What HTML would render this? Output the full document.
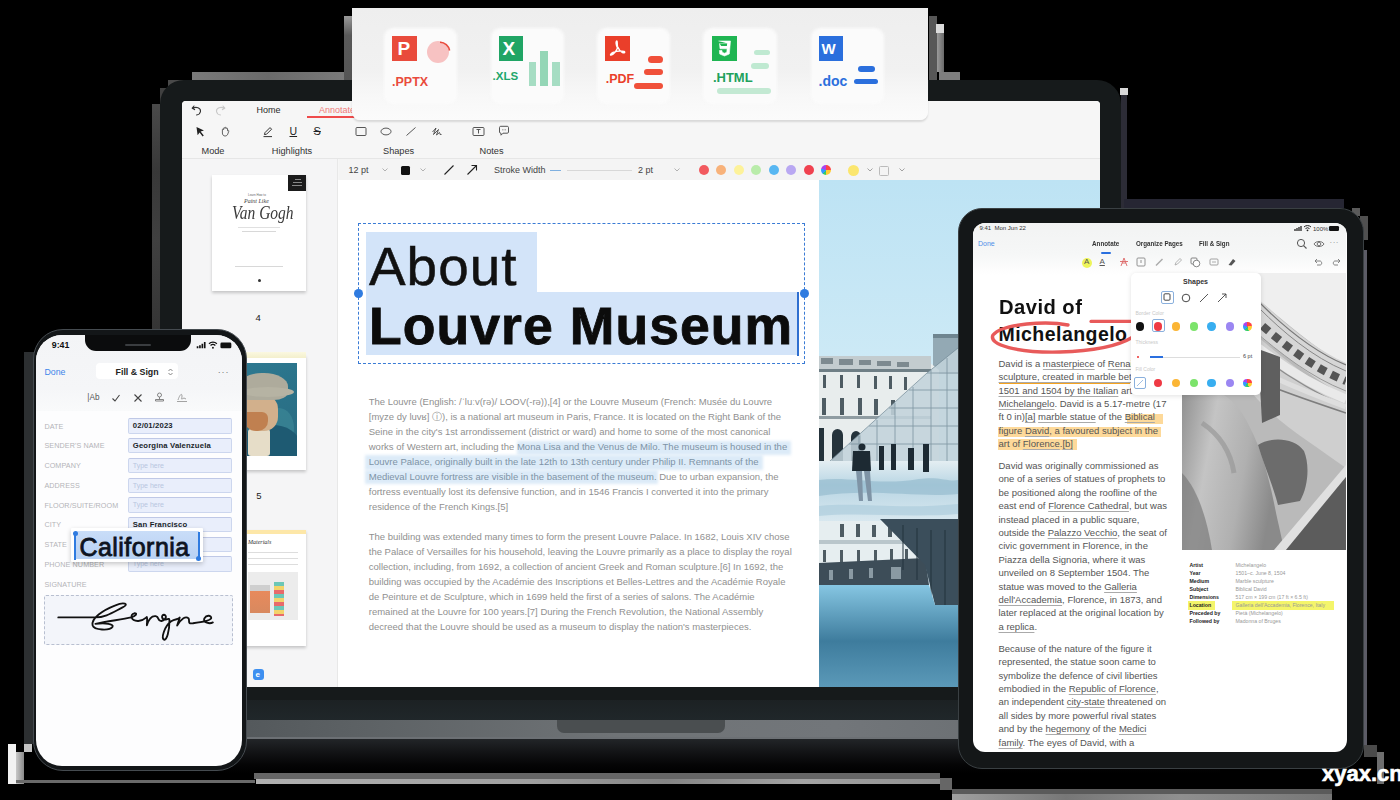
<!DOCTYPE html>
<html><head><meta charset="utf-8">
<style>
*{margin:0;padding:0;box-sizing:border-box}
html,body{width:1400px;height:800px;overflow:hidden;background:#000}
body{position:relative;font-family:"Liberation Sans",sans-serif;color:#222}
.a{position:absolute}
.t{position:absolute;white-space:pre;line-height:1}
</style></head><body>


<!-- artifacts -->
<div class="a" style="left:8px;top:744px;width:8px;height:40px;background:#f2f2f2"></div>
<div class="a" style="left:16px;top:752px;width:8px;height:32px;background:linear-gradient(90deg,#c8c8c8,#8a8a8a)"></div>
<div class="a" style="left:24px;top:744px;width:8px;height:8px;background:#c4c4c4"></div>
<div class="a" style="left:16px;top:780px;width:239px;height:3px;background:#6a6a6a"></div>
<div class="a" style="left:254px;top:772.5px;width:686px;height:6px;background:#666"></div>
<div class="a" style="left:255.5px;top:778.5px;width:684.5px;height:5.5px;background:linear-gradient(90deg,#b0b0b0,#a0a0a0 40%,#858585 60%,#a4a4a4 80%,#909090)"></div>
<div class="a" style="left:940px;top:778px;width:12px;height:12px;background:#666"></div>
<div class="a" style="left:952px;top:789px;width:380px;height:5px;background:#5a5a5a"></div>
<div class="a" style="left:952px;top:794px;width:380px;height:6px;background:linear-gradient(90deg,#a0a0a0,#777 30%,#8f8f8f 60%,#767676)"></div>

<div class="a" style="left:192px;top:72px;width:153px;height:8.5px;background:linear-gradient(90deg,#7a7a7a,#6a6a6a 50%,#7a7a7a)"></div>
<div class="a" style="left:168px;top:80px;width:30px;height:20px;background:#4a4a4a"></div>
<div class="a" style="left:160px;top:88px;width:10px;height:20px;background:#404040"></div>
<div class="a" style="left:152px;top:104px;width:9px;height:226px;background:linear-gradient(#4a4a4a,#383838 30%,#404040 60%,#353535)"></div>

<div class="a" style="left:1120px;top:88px;width:7.5px;height:7px;background:#d8d8d8"></div>
<div class="a" style="left:1121px;top:95px;width:6px;height:113px;background:#2c2c36"></div>
<div class="a" style="left:1124px;top:199px;width:220px;height:9px;background:#262633"></div>
<div class="a" style="left:1352px;top:208px;width:8px;height:8px;background:#5a5a5a"></div>
<div class="a" style="left:1360px;top:216px;width:8px;height:24px;background:#505050"></div>

<div class="a" style="left:344.4px;top:16px;width:8px;height:64px;background:linear-gradient(#9a9a9a,#5a5a5a 30%,#555)"></div>
<div class="a" style="left:929px;top:16px;width:8px;height:64px;background:#575757"></div>
<div class="a" style="left:936px;top:24px;width:8px;height:9px;background:#dcdcdc"></div>
<div class="a" style="left:937px;top:33px;width:7px;height:39px;background:linear-gradient(90deg,#9a9a9a,#6a6a6a)"></div>
<div class="a" style="left:939px;top:71.5px;width:21px;height:8.5px;background:#7e7e7e"></div>
<!-- ============ LAPTOP ============ -->
<div id="laptop">
  <!-- base -->
  <div class="a" style="left:120px;top:699px;width:1100px;height:22px;background:linear-gradient(#1c2123,#20272a)"></div>
  <div class="a" style="left:120px;top:720px;width:1100px;height:19px;background:linear-gradient(90deg,#4a4f52,#5b6063 20%,#6f7376 45%,#72767a 65%,#62676a)"></div><div class="a" style="left:120px;top:737px;width:1100px;height:1.5px;background:#6c7074"></div>
  <div class="a" style="left:557px;top:720px;width:168px;height:13px;background:#4a4e50;border-radius:0 0 7px 7px"></div>
  <div class="a" style="left:120px;top:738.5px;width:1100px;height:34px;background:linear-gradient(#222528,#121315 40%,#050506 75%,#000)"></div>
  <!-- bezel -->
  <div class="a" style="left:160px;top:80px;width:961px;height:620px;background:#161a1b;border-radius:24px 24px 0 0"></div>
  <!-- screen -->
  <div id="screen" class="a" style="left:182px;top:101px;width:918px;height:586px;background:#fff;border-radius:4px 4px 0 0;overflow:hidden">
    <!-- toolbar bg -->
    <div class="a" style="left:0;top:0;width:918px;height:79px;background:#f6f6f6"></div>
    <div class="a" style="left:0;top:57px;width:918px;height:1px;background:#e6e6e6"></div>
    <!-- top row -->
    <svg class="a" style="left:9px;top:3px" width="12" height="12" viewBox="0 0 12 12"><path d="M3 2 L1.2 4.2 L3.6 5.6 M1.5 4.2 C5 2.5 10 3.5 9.5 7.5 C9 10 7 10.8 5.5 11" fill="none" stroke="#333" stroke-width="1.1" stroke-linecap="round" stroke-linejoin="round"/></svg>
    <svg class="a" style="left:32px;top:3px" width="12" height="12" viewBox="0 0 12 12"><path d="M9 2 L10.8 4.2 L8.4 5.6 M10.5 4.2 C7 2.5 2 3.5 2.5 7.5 C3 10 5 10.8 6.5 11" fill="none" stroke="#c8c8c8" stroke-width="1.1" stroke-linecap="round" stroke-linejoin="round"/></svg>
    <div class="t" style="left:74.5px;top:4.5px;font-size:9px;color:#2a2a2a">Home</div>
    <div class="t" style="left:137px;top:4.5px;font-size:9px;color:#f07a7a">Annotate</div>
    <div class="a" style="left:125px;top:15px;width:48px;height:2px;background:#ef4b4b"></div>
    <!-- icon row -->
    <svg class="a" style="left:13px;top:25px" width="11" height="11" viewBox="0 0 11 11"><path d="M1.5 1 L9 4.6 L5.6 5.6 L8.8 9.6 L7.6 10.4 L4.6 6.6 L2.6 9.2 Z" fill="#222"/></svg>
    <svg class="a" style="left:38px;top:25px" width="11" height="11" viewBox="0 0 11 11"><path d="M2.4 6 V3.6 C2.4 2.6 3.6 2.6 3.6 3.6 V2.4 C3.6 1.4 4.9 1.4 4.9 2.4 V2.1 C4.9 1.1 6.2 1.1 6.2 2.1 V2.6 C6.2 1.7 7.5 1.7 7.5 2.7 V4.8 C8 4 9 4.3 8.8 5.2 L7.8 8 C7.3 9.4 6.4 10 5 10 C3.3 10 2.4 8.6 2.4 7 Z" fill="none" stroke="#555" stroke-width="0.9"/></svg>
    <svg class="a" style="left:80px;top:25px" width="12" height="12" viewBox="0 0 12 12"><path d="M2.4 8.6 L3 6.6 L8 1.6 L9.6 3.2 L4.6 8.2 Z M1.5 10.6 H10" fill="none" stroke="#333" stroke-width="1" stroke-linejoin="round"/></svg>
    <div class="t" style="left:107.5px;top:25px;font-size:10.5px;color:#222;text-decoration:underline">U</div>
    <div class="t" style="left:131.5px;top:25px;font-size:11px;color:#222;text-decoration:line-through">S</div>
    <svg class="a" style="left:173px;top:25px" width="12" height="11" viewBox="0 0 12 11"><rect x="1" y="1.5" width="10" height="8" rx="1" fill="none" stroke="#444" stroke-width="0.9"/></svg>
    <svg class="a" style="left:198px;top:25px" width="12" height="11" viewBox="0 0 12 11"><ellipse cx="6" cy="5.5" rx="5" ry="3.4" fill="none" stroke="#444" stroke-width="0.9"/></svg>
    <svg class="a" style="left:223px;top:25px" width="12" height="11" viewBox="0 0 12 11"><path d="M1.5 9.5 L10.5 1.5" stroke="#444" stroke-width="0.9"/></svg>
    <svg class="a" style="left:249px;top:25px" width="12" height="11" viewBox="0 0 12 11"><path d="M1.5 6 L5 2 L2.5 8.5 L7.5 3.5 L5.5 9 L8.5 6.5 L9.5 9 L10.5 8" fill="none" stroke="#444" stroke-width="0.9" stroke-linejoin="round"/></svg>
    <svg class="a" style="left:290px;top:25px" width="13" height="11" viewBox="0 0 13 11"><rect x="1" y="1.5" width="11" height="8" rx="1" fill="none" stroke="#444" stroke-width="0.9"/><path d="M4.5 3.5 H8.5 M6.5 3.5 V7.5" stroke="#444" stroke-width="0.9"/></svg>
    <svg class="a" style="left:316px;top:24px" width="12" height="12" viewBox="0 0 12 12"><path d="M1.5 2.5 C1.5 1.8 2 1.3 2.7 1.3 H9.3 C10 1.3 10.5 1.8 10.5 2.5 V7 C10.5 7.7 10 8.2 9.3 8.2 H5 L3 10.2 V8.2 H2.7 C2 8.2 1.5 7.7 1.5 7 Z" fill="none" stroke="#444" stroke-width="0.9"/><path d="M4 4.8 H4.6 M5.7 4.8 H6.3 M7.4 4.8 H8" stroke="#444" stroke-width="0.9"/></svg>
    <!-- labels -->
    <div class="t" style="left:19.5px;top:45.8px;font-size:9.2px;color:#333">Mode</div>
    <div class="t" style="left:89.8px;top:45.8px;font-size:9.2px;color:#333">Highlights</div>
    <div class="t" style="left:201px;top:45.8px;font-size:9.2px;color:#333">Shapes</div>
    <div class="t" style="left:297.5px;top:45.8px;font-size:9.2px;color:#333">Notes</div>
    <!-- sidebar -->
    <div class="a" style="left:0;top:58px;width:156px;height:528px;background:#f5f5f6;border-right:1px solid #e8e8e8"></div>
    <!-- property bar -->
    <div class="a" style="left:157px;top:58px;width:761px;height:21px;background:#f4f4f4"></div>
    <div class="t" style="left:166.5px;top:64.5px;font-size:9px;color:#444">12 pt</div>
    <svg class="a" style="left:199px;top:66px" width="8" height="6" viewBox="0 0 8 6"><path d="M1.5 1.5 L4 4 L6.5 1.5" fill="none" stroke="#aaa" stroke-width="0.9"/></svg>
    <div class="a" style="left:219px;top:64.7px;width:9.3px;height:9px;background:#111;border-radius:1.5px"></div>
    <svg class="a" style="left:237px;top:66px" width="8" height="6" viewBox="0 0 8 6"><path d="M1.5 1.5 L4 4 L6.5 1.5" fill="none" stroke="#aaa" stroke-width="0.9"/></svg>
    <svg class="a" style="left:261px;top:63px" width="12" height="12" viewBox="0 0 12 12"><path d="M1.5 10.5 L10.5 1.5" stroke="#222" stroke-width="1.1"/></svg>
    <svg class="a" style="left:284px;top:63px" width="12" height="12" viewBox="0 0 12 12"><path d="M1.5 10.5 L10.5 1.5 M5.5 1.5 H10.5 V6.5" fill="none" stroke="#222" stroke-width="1.1"/></svg>
    <div class="t" style="left:312px;top:64.5px;font-size:9px;color:#444">Stroke Width</div>
    <div class="a" style="left:368px;top:68.5px;width:11px;height:1.5px;background:#7fb0e0"></div>
    <div class="a" style="left:385px;top:68.5px;width:65px;height:1.5px;background:#d8d8d8"></div>
    <div class="t" style="left:456px;top:64.5px;font-size:9px;color:#444">2 pt</div>
    <svg class="a" style="left:491px;top:66px" width="8" height="6" viewBox="0 0 8 6"><path d="M1.5 1.5 L4 4 L6.5 1.5" fill="none" stroke="#aaa" stroke-width="0.9"/></svg>
    <div class="a" style="left:517px;top:64.3px;width:10px;height:10px;border-radius:50%;background:#f25a5f"></div>
    <div class="a" style="left:534px;top:64.3px;width:10px;height:10px;border-radius:50%;background:#f8b27a"></div>
    <div class="a" style="left:552px;top:64.3px;width:10px;height:10px;border-radius:50%;background:#fdf29a"></div>
    <div class="a" style="left:569px;top:64.3px;width:10px;height:10px;border-radius:50%;background:#b9ecaa"></div>
    <div class="a" style="left:587px;top:64.3px;width:10px;height:10px;border-radius:50%;background:#58b7f2"></div>
    <div class="a" style="left:604px;top:64.3px;width:10px;height:10px;border-radius:50%;background:#b9a8f2"></div>
    <div class="a" style="left:621.5px;top:64.3px;width:10px;height:10px;border-radius:50%;background:#f04250"></div>
    <div class="a" style="left:639px;top:64.3px;width:10px;height:10px;border-radius:50%;background:conic-gradient(#f44 0 25%,#fc3 25% 50%,#3c6 50% 62%,#39f 62% 80%,#a4e 80%)"></div>
    <div class="a" style="left:665.5px;top:64px;width:11px;height:11px;border-radius:50%;background:#fbe66e"></div>
    <svg class="a" style="left:684px;top:66px" width="8" height="6" viewBox="0 0 8 6"><path d="M1.5 1.5 L4 4 L6.5 1.5" fill="none" stroke="#999" stroke-width="0.9"/></svg>
    <div class="a" style="left:696.5px;top:64.5px;width:10px;height:10px;border:1.6px solid #bbb;border-radius:1.5px"></div>
    <svg class="a" style="left:715.5px;top:66px" width="8" height="6" viewBox="0 0 8 6"><path d="M1.5 1.5 L4 4 L6.5 1.5" fill="none" stroke="#999" stroke-width="0.9"/></svg>
    
    <svg class="a" style="left:637px;top:79px" width="281" height="507" viewBox="0 0 281 507">
      <defs>
        <linearGradient id="sky" x1="0" y1="0" x2="0" y2="1"><stop offset="0" stop-color="#bde3f4"/><stop offset="1" stop-color="#e9f5f9"/></linearGradient>
        <linearGradient id="water" x1="0" y1="0" x2="0" y2="1"><stop offset="0" stop-color="#6db0d2"/><stop offset="0.5" stop-color="#5199c2"/><stop offset="1" stop-color="#3f86b0"/></linearGradient>
        <linearGradient id="grnd" x1="0" y1="0" x2="0" y2="1"><stop offset="0" stop-color="#e4eef2"/><stop offset="0.4" stop-color="#b9d6e4"/><stop offset="1" stop-color="#d8e8ef"/></linearGradient>
      </defs>
      <rect x="0" y="0" width="281" height="507" fill="url(#sky)"/>
      <!-- tall bldg behind pyramid -->
      <rect x="114" y="154" width="30" height="40" fill="#93a9b4"/>
      <rect x="114" y="154" width="30" height="4" fill="#6f8590"/>
      <!-- building -->
      <polygon points="0,176 110,182 120,190 120,281 0,281" fill="#e8eded"/>
      <rect x="0" y="176" width="112" height="13" fill="#c3cccf"/>
      <g fill="#7d8a90"><rect x="2" y="178" width="12" height="6"/><rect x="20" y="179" width="14" height="6"/><rect x="40" y="180" width="12" height="5"/><rect x="58" y="181" width="14" height="5"/><rect x="78" y="182" width="12" height="5"/></g>
      <rect x="0" y="189" width="112" height="3" fill="#6f7f86"/>
      <rect x="0" y="236" width="112" height="3" fill="#8f9ca2"/>
      <g fill="#4e5c63">
        <rect x="4" y="195" width="3" height="13"/><rect x="21" y="195" width="3" height="13"/><rect x="38" y="195" width="3" height="13"/><rect x="55" y="196" width="3" height="13"/><rect x="70" y="196" width="3" height="13"/><rect x="85" y="197" width="3" height="13"/>
        <rect x="3" y="218" width="4" height="17"/><rect x="21" y="218" width="4" height="17"/><rect x="39" y="218" width="4" height="17"/><rect x="55" y="219" width="4" height="16"/><rect x="72" y="220" width="4" height="15"/>
      </g>
      <g fill="#25333b">
        <path d="M0 248 h5 v33 h-5z"/><path d="M13 281 v-26 a5.5 6 0 0 1 11 0 v26z"/><path d="M32 281 v-24 a5 6 0 0 1 10 0 v24z"/>
      </g>
      <!-- pyramid -->
      <polygon points="11,281 108,193 139,168 139,290" fill="#c2d3db" opacity="0.88"/>
      <g stroke="#6e8693" stroke-width="0.9" fill="none" opacity="0.75">
        <path d="M11 281 L108 193 L139 168"/>
        <path d="M40 256 V283 M58 240 V283 M76 223 V283 M94 207 V283 M112 190 V283 M128 178 V283"/>
        <path d="M30 264 H139 M50 246 H139 M70 228 H139 M90 210 H139 M108 193 H139"/>
      </g>
      <!-- ground -->
      <rect x="0" y="281" width="281" height="60" fill="url(#grnd)"/>
      <path d="M0 300 C30 296 60 306 100 299 C120 296 130 302 139 300 V314 C100 318 50 308 0 316Z" fill="#8fb7cb" opacity="0.6"/>
      <path d="M0 326 C40 322 80 330 139 324 V334 C90 338 40 332 0 336Z" fill="#a9cadb" opacity="0.6"/>
      <!-- people -->
      <g fill="#1d2a33">
        <ellipse cx="43" cy="267" rx="3.5" ry="3.5"/><path d="M34 271 h17 l1 20 h-19z"/><path d="M37 291 h6 l1 30 h-4z M45 291 h6 l2 30 h-4z" fill="#7f94a6"/>
        <path d="M60 266 h5 v24 h-5z"/><path d="M72 264 h5 v26 h-5z"/><path d="M89 268 h6 v22 h-6z"/><path d="M104 264 h6 v28 h-6z"/>
      </g>
      <!-- reflection building -->
      <rect x="0" y="341" width="120" height="44" fill="#e6eef0"/>
      <g fill="#4e5c63">
        <rect x="21" y="344" width="4" height="13"/><rect x="37" y="344" width="4" height="13"/><rect x="53" y="345" width="4" height="12"/><rect x="69" y="345" width="4" height="12"/>
        <rect x="4" y="370" width="3" height="12"/><rect x="21" y="370" width="3" height="12"/><rect x="38" y="370" width="3" height="12"/><rect x="55" y="370" width="3" height="11"/><rect x="71" y="369" width="3" height="11"/><rect x="86" y="369" width="3" height="11"/>
      </g>
      <rect x="0" y="360" width="100" height="4" fill="#b9c6cb"/>
      <polygon points="0,383 106,378 110,405 0,405" fill="#3d4d58"/>
      <g fill="#8a9aa3"><rect x="10" y="390" width="4" height="10"/><rect x="30" y="389" width="4" height="10"/><rect x="50" y="388" width="4" height="10"/><rect x="72" y="387" width="10" height="12"/></g>
      <!-- pyramid reflection -->
      <polygon points="61,339 139,339 139,425 116,425 106,385" fill="#3b4e5b"/>
      <g stroke="#22323c" stroke-width="1"><path d="M84 345 V390 M98 348 V400 M112 350 V420 M126 350 V425"/></g>
      <!-- water -->
      <linearGradient id="water2" x1="0" y1="0" x2="0" y2="1"><stop offset="0" stop-color="#86c6e2"/><stop offset="0.55" stop-color="#3e7c9d"/><stop offset="1" stop-color="#5b99b8"/></linearGradient>
      <polygon points="0,405 110,405 116,425 139,425 139,507 0,507" fill="url(#water2)"/>
      <rect x="139" y="425" width="142" height="82" fill="url(#water2)"/>
    </svg>

    
    <!-- thumb 1 -->
    <div class="a" style="left:30px;top:74px;width:93.5px;height:116px;background:#fff;box-shadow:0 2px 3px rgba(0,0,0,0.2)">
      <div class="a" style="left:76px;top:0;width:17.5px;height:16px;background:#1b1b1b"></div>
      <div class="a" style="left:83px;top:4px;width:6px;height:1px;background:#888"></div>
      <div class="a" style="left:81px;top:7px;width:9px;height:1px;background:#888"></div>
      <div class="a" style="left:80px;top:10px;width:10px;height:1px;background:#888"></div>
      <div class="t" style="left:36px;top:19px;font-size:3px;color:#666">Learn How to</div>
      <div class="t" style="left:32px;top:23px;font-size:6px;color:#444;font-family:'Liberation Serif';font-style:italic">Paint Like</div>
      <div class="t" style="left:20px;top:29px;font-size:15.5px;color:#3a3a3a;font-family:'Liberation Serif';font-style:italic;transform:scaleY(1.15);transform-origin:0 0">Van Gogh</div>
      <div class="a" style="left:26px;top:52px;width:42px;height:1px;background:#e0e0e0"></div>
      <div class="a" style="left:30px;top:56px;width:34px;height:1px;background:#d8d8d8"></div>
      <div class="a" style="left:23px;top:91px;width:48px;height:1px;background:#d8d8d8"></div>
      <div class="a" style="left:46px;top:104px;width:3px;height:3px;background:#333;border-radius:50%"></div>
    </div>
    <div class="t" style="left:73.5px;top:211.7px;font-size:9.5px;color:#222">4</div>
    <!-- thumb 2 -->
    <div class="a" style="left:30px;top:254px;width:93.6px;height:115px;background:#fff;box-shadow:0 2px 3px rgba(0,0,0,0.2)">
      <div class="a" style="left:0;top:-3px;width:93.6px;height:6px;background:linear-gradient(#fbf8e0,#f3efcc)"></div>
      <div class="a" style="left:2px;top:7.75px;width:83px;height:93px;background:linear-gradient(150deg,#2f7b93,#2a7289 50%,#2a6b80);overflow:hidden">
        <div class="a" style="left:50px;top:45px;width:30px;height:40px;border-radius:50%;background:#3f8a9a;opacity:0.6"></div>
        <div class="a" style="left:30px;top:62px;width:55px;height:35px;border-radius:40% 50% 0 0;background:#1e5a72"></div>
        <div class="a" style="left:34px;top:66px;width:22px;height:27px;background:#e6ddc8;border-radius:3px"></div>
        <div class="a" style="left:30px;top:32px;width:34px;height:36px;border-radius:10px 14px 14px 16px;background:#d2b08c"></div>
        <div class="a" style="left:30px;top:49px;width:24px;height:19px;border-radius:3px 6px 10px 12px;background:#c08050"></div>
        <div class="a" style="left:26px;top:10px;width:48px;height:27px;border-radius:45% 50% 30% 20%;background:#aeab9c"></div>
        <div class="a" style="left:28px;top:24px;width:52px;height:10px;border-radius:50%;background:#b6b3a3"></div>
      </div>
    </div>
    <div class="t" style="left:74.3px;top:390px;font-size:9.5px;color:#222">5</div>
    <!-- thumb 3 -->
    <div class="a" style="left:30px;top:429px;width:93.6px;height:116px;background:#fff;box-shadow:0 2px 3px rgba(0,0,0,0.2)">
      <div class="a" style="left:0;top:0;width:93.6px;height:4px;background:#fde7a8"></div>
      <div class="t" style="left:36px;top:9px;font-size:6px;color:#333;font-family:'Liberation Serif';font-style:italic">Materials</div>
      <div class="a" style="left:36px;top:22px;width:50px;height:1px;background:#ddd"></div>
      <div class="a" style="left:36px;top:28px;width:50px;height:1px;background:#ddd"></div>
      <div class="a" style="left:36px;top:34px;width:50px;height:1px;background:#ddd"></div>
      <div class="a" style="left:36px;top:42px;width:50px;height:48px;background:#ececec"></div>
      <div class="a" style="left:38px;top:55px;width:20px;height:28px;background:linear-gradient(#cfcfcf 20%,#e88a5c 20%,#d8895f)"></div>
      <div class="a" style="left:62px;top:52px;width:10px;height:34px;background:repeating-linear-gradient(#6cc7b7 0 4px,#f3d36a 4px 8px,#e86a6a 8px 12px)"></div>
    </div>
    <!-- app icon -->
    <div class="a" style="left:71px;top:568px;width:11px;height:11px;background:#3d8ff0;border-radius:3px"></div>
    <div class="t" style="left:73.5px;top:569.5px;font-size:8px;color:#fff;font-weight:bold">e</div>

    
    <div class="a" style="left:183.5px;top:131px;width:171.2px;height:60px;background:#d3e4f9"></div>
    <div class="a" style="left:183.5px;top:191px;width:433px;height:63px;background:#d3e4f9"></div>
    <div class="a" style="left:176.2px;top:121.5px;width:446.6px;height:141.8px;border:1.2px dashed #3a7bd5"></div>
    <div class="a" style="left:171.5px;top:188px;width:9px;height:9px;border-radius:50%;background:#2f7be0"></div>
    <div class="a" style="left:618.3px;top:188px;width:9px;height:9px;border-radius:50%;background:#2f7be0"></div>
    <div class="a" style="left:614.8px;top:191px;width:2px;height:64px;background:#2f6fd0"></div>
    <div class="t" style="left:187px;top:138.5px;font-size:53px;color:#111;letter-spacing:1px;transform:scaleX(1.035);transform-origin:0 0;-webkit-text-stroke:0.5px #111">About</div>
    <div class="t" style="left:187px;top:199.5px;font-size:51px;color:#0c0c0c;font-weight:bold;letter-spacing:1px;transform:scaleX(1.05);transform-origin:0 0;-webkit-text-stroke:0.8px #0c0c0c">Louvre Museum</div>
    <!-- highlight soft -->
    <div class="a" style="left:335px;top:340px;width:274px;height:14px;background:#dcebf8;filter:blur(1.5px)"></div>
    <div class="a" style="left:183px;top:354px;width:398px;height:15px;background:#dcebf8;filter:blur(1.5px)"></div>
    <div class="a" style="left:183px;top:369px;width:293px;height:14px;background:#dcebf8;filter:blur(1.5px)"></div>
    <div class="a" style="left:186.75px;top:293px;font-size:9.5px;line-height:15px;color:#909090;white-space:pre">The Louvre (English: /ˈluːv(rə)/ LOOV(-rə)),[4] or the Louvre Museum (French: Musée du Louvre
[myze dy luvʁ] ⓘ), is a national art museum in Paris, France. It is located on the Right Bank of the
Seine in the city's 1st arrondissement (district or ward) and home to some of the most canonical
works of Western art, including the <span style="color:#7e93a6">Mona Lisa and the Venus de Milo. The museum is housed in the</span>
<span style="color:#7e93a6">Louvre Palace, originally built in the late 12th to 13th century under Philip II. Remnants of the</span>
<span style="color:#7e93a6">Medieval Louvre fortress are visible in the basement of the museum.</span> Due to urban expansion, the
fortress eventually lost its defensive function, and in 1546 Francis I converted it into the primary
residence of the French Kings.[5]</div>
    <div class="a" style="left:186.75px;top:428px;font-size:9.5px;line-height:15px;color:#909090;white-space:pre">The building was extended many times to form the present Louvre Palace. In 1682, Louis XIV chose
the Palace of Versailles for his household, leaving the Louvre primarily as a place to display the royal
collection, including, from 1692, a collection of ancient Greek and Roman sculpture.[6] In 1692, the
building was occupied by the Académie des Inscriptions et Belles-Lettres and the Académie Royale
de Peinture et de Sculpture, which in 1699 held the first of a series of salons. The Académie
remained at the Louvre for 100 years.[7] During the French Revolution, the National Assembly
decreed that the Louvre should be used as a museum to display the nation's masterpieces.</div>

  </div>
</div>

<!-- ============ FORMAT PANEL ============ -->
<div id="fmt" class="a" style="left:352px;top:8px;width:576px;height:112px;background:linear-gradient(#eeeeee,#f1f1f1 55%,#f8f8f8 80%,#fbfbfb);border-radius:0 0 8px 8px;box-shadow:0 1.5px 2px rgba(0,0,0,0.12)">
  <!-- cards -->
  <div class="a" style="left:32px;top:20px;width:73px;height:76px;background:#fbfbfb;border-radius:9px;filter:blur(1.5px)"></div>
  <div class="a" style="left:139px;top:20px;width:73px;height:76px;background:#fbfbfb;border-radius:9px;filter:blur(1.5px)"></div>
  <div class="a" style="left:245px;top:20px;width:73px;height:76px;background:#fbfbfb;border-radius:9px;filter:blur(1.5px)"></div>
  <div class="a" style="left:351px;top:20px;width:74px;height:76px;background:#fbfbfb;border-radius:9px;filter:blur(1.5px)"></div>
  <div class="a" style="left:459px;top:20px;width:73px;height:76px;background:#fbfbfb;border-radius:9px;filter:blur(1.5px)"></div>
  <!-- PPTX -->
  <div class="a" style="left:40px;top:28px;width:24.5px;height:24.5px;background:#e94b3c"></div>
  <div class="t" style="left:45.5px;top:31px;font-size:19px;font-weight:bold;color:#fff">P</div>
  <div class="a" style="left:75px;top:33px;width:22px;height:22px;border-radius:50%;background:#f7c2c2"></div>
  <svg class="a" style="left:75px;top:32px" width="24" height="24" viewBox="0 0 24 24"><path d="M13 2.2 A10 10 0 0 1 22.6 10.5" fill="none" stroke="#e94b3c" stroke-width="1.6"/></svg>
  <div class="t" style="left:40px;top:67.5px;font-size:12.5px;font-weight:bold;color:#e94b3c">.PPTX</div>
  <!-- XLS -->
  <div class="a" style="left:146.6px;top:28px;width:24.5px;height:24.5px;background:#20a565"></div>
  <div class="t" style="left:150.5px;top:31px;font-size:19px;font-weight:bold;color:#fff">X</div>
  <div class="a" style="left:176.6px;top:54px;width:7.5px;height:23.7px;background:#a6ddc3"></div>
  <div class="a" style="left:188px;top:43.4px;width:8px;height:34.3px;background:#94d6b6"></div>
  <div class="a" style="left:200px;top:54px;width:7.6px;height:23.7px;background:#a6ddc3"></div>
  <div class="t" style="left:140.6px;top:63px;font-size:11.5px;font-weight:bold;color:#1ea76b">.XLS</div>
  <!-- PDF -->
  <div class="a" style="left:253px;top:28px;width:24.7px;height:24.7px;background:#ea3f2a"></div>
  <svg class="a" style="left:253px;top:28px" width="25" height="25" viewBox="0 0 25 25"><path d="M12 5 C10.5 5 11 9 12.5 12 C11 15.5 8.5 18.5 6 19 C5 19.3 5.5 17.5 8 16.5 C11 15.3 15 14.5 19 15.5 C20.5 16 19.5 17.5 17.5 16.5 C15.5 15.5 13.5 13 12.5 10.5 C12 8.5 12.5 5 12 5Z" fill="none" stroke="#fff" stroke-width="1.4"/></svg>
  <div class="t" style="left:253.7px;top:65px;font-size:12.5px;font-weight:bold;color:#ea3f2a">.PDF</div>
  <div class="a" style="left:295.5px;top:48px;width:15px;height:6.6px;border-radius:4px;background:#f0503a"></div>
  <div class="a" style="left:292px;top:61px;width:18.5px;height:6.4px;border-radius:4px;background:#f0503a"></div>
  <div class="a" style="left:282px;top:74.5px;width:28.5px;height:6.5px;border-radius:4px;background:#f0503a"></div>
  <!-- HTML -->
  <div class="a" style="left:360px;top:28px;width:24.6px;height:24.6px;background:#1fb552"></div>
  <svg class="a" style="left:360px;top:28px" width="25" height="25" viewBox="0 0 25 25"><path d="M6.5 5 H18.5 L17.3 18 L12.5 20 L7.7 18 L7.4 14.5 H10 L10.2 16.3 L12.5 17.2 L14.8 16.3 L15.1 12.8 H8 L7.5 7.6 H15.8" fill="#fff" stroke="#fff" stroke-width="0.6" stroke-linejoin="round"/><path d="M9.2 10 H14.9 L15.1 7.6 H7.6" fill="#1fb552"/></svg>
  <div class="t" style="left:360.9px;top:62.5px;font-size:13px;font-weight:bold;color:#21a15c">.HTML</div>
  <div class="a" style="left:402px;top:41.7px;width:15.6px;height:5.6px;border-radius:3px;background:#bfe9d1"></div>
  <div class="a" style="left:399px;top:54.6px;width:17.6px;height:6px;border-radius:3px;background:#bfe9d1"></div>
  <div class="a" style="left:365px;top:80.3px;width:54px;height:6px;border-radius:3px;background:#c3e9d3"></div>
  <!-- DOC -->
  <div class="a" style="left:466.5px;top:28px;width:24.5px;height:24.5px;background:#2b6fdd"></div>
  <div class="t" style="left:469.5px;top:33px;font-size:15px;font-weight:bold;color:#fff">W</div>
  <div class="t" style="left:466.5px;top:65.8px;font-size:14px;font-weight:bold;color:#2b6fdd">.doc</div>
  <div class="a" style="left:505.5px;top:58.4px;width:17px;height:5.5px;border-radius:3px;background:#2b6fdd"></div>
  <div class="a" style="left:502.3px;top:70.9px;width:23.5px;height:5.5px;border-radius:3px;background:#2b6fdd"></div>
</div>

<!-- ============ IPAD ============ -->
<div class="a" style="left:1364px;top:250px;width:2.5px;height:495px;background:#5c5c66"></div>
<div id="ipad" class="a" style="left:958px;top:207.5px;width:406px;height:561px;background:#141718;border-radius:24px;border:1.5px solid #3a4043">
  <div id="ipscreen" class="a" style="left:13.5px;top:14.5px;width:374px;height:529px;background:#fff;border-radius:12px;overflow:hidden">
    <div class="a" style="left:0;top:0;width:373px;height:52px;background:linear-gradient(#f2f3f3,#f6f7f7 60%,#fdfdfd 90%,#fff)"></div>
    <!-- status -->
    <div class="t" style="left:7px;top:1.5px;font-size:6px;color:#333">9:41&nbsp;&nbsp;Mon Jun 22</div>
    <svg class="a" style="left:321px;top:1px" width="50" height="8" viewBox="0 0 50 8"><path d="M1 7 v-2 M3 7 v-3 M5 7 v-4 M7 7 v-5" stroke="#222" stroke-width="1.3"/><path d="M10 3 a5 5 0 0 1 7 0 M11.5 4.6 a3 3 0 0 1 4 0" fill="none" stroke="#222" stroke-width="1"/><circle cx="13.5" cy="6.3" r="0.9" fill="#222"/><text x="19" y="6.6" font-size="6" font-family="Liberation Sans" fill="#333">100%</text><rect x="35" y="2" width="10" height="5" rx="1.2" fill="#111"/></svg>
    <!-- nav -->
    <div class="t" style="left:5.5px;top:16.5px;font-size:7px;color:#4f8fe8">Done</div>
    <div class="t" style="left:119.5px;top:16.5px;font-size:7px;color:#333;font-weight:bold;transform:scaleX(0.9);transform-origin:0 0">Annotate</div>
    <div class="a" style="left:128px;top:28.5px;width:10px;height:2px;background:#2a6fdf;border-radius:1px"></div>
    <div class="t" style="left:163.5px;top:16.5px;font-size:7px;color:#333;font-weight:bold;transform:scaleX(0.89);transform-origin:0 0">Organize Pages</div>
    <div class="t" style="left:226px;top:16.5px;font-size:7px;color:#333;font-weight:bold;transform:scaleX(0.89);transform-origin:0 0">Fill &amp; Sign</div>
    <svg class="a" style="left:323px;top:15px" width="12" height="12" viewBox="0 0 12 12"><circle cx="5" cy="5" r="3.6" fill="none" stroke="#555" stroke-width="1"/><path d="M7.6 7.6 L10.5 10.5" stroke="#555" stroke-width="1.1"/></svg>
    <svg class="a" style="left:340px;top:15px" width="12" height="12" viewBox="0 0 12 12"><path d="M1 6 C3 2.6 9 2.6 11 6 C9 9.4 3 9.4 1 6Z" fill="none" stroke="#666" stroke-width="0.9"/><circle cx="6" cy="6" r="1.8" fill="none" stroke="#666" stroke-width="0.9"/></svg>
    <div class="t" style="left:357px;top:15.5px;font-size:8px;color:#888;letter-spacing:0.5px">···</div>
    <!-- tools -->
    <div class="a" style="left:109.5px;top:34.5px;width:10px;height:10px;border-radius:50%;background:#eef55a"></div>
    <div class="t" style="left:111.5px;top:35px;font-size:8px;color:#555">A</div>
    <div class="t" style="left:127px;top:35px;font-size:8px;color:#555;text-decoration:underline">A</div>
    <svg class="a" style="left:146px;top:34px" width="10" height="10" viewBox="0 0 10 10"><path d="M5 1 L2 9 M5 1 L8 9 M3 6 H7 M1 4.5 H9" fill="none" stroke="#d66" stroke-width="0.9"/></svg>
    <svg class="a" style="left:163px;top:34px" width="10" height="10" viewBox="0 0 10 10"><rect x="1" y="1" width="8" height="8" rx="1" fill="none" stroke="#888" stroke-width="0.9"/><path d="M5 3 V6" stroke="#888" stroke-width="0.9"/></svg>
    <svg class="a" style="left:181px;top:34px" width="10" height="10" viewBox="0 0 10 10"><path d="M2 8.5 L8.5 2" stroke="#aaa" stroke-width="1.4"/></svg>
    <svg class="a" style="left:200px;top:34px" width="10" height="10" viewBox="0 0 10 10"><path d="M2 8 L3 5.5 L7 1.5 L8.5 3 L4.5 7Z" fill="none" stroke="#aaa" stroke-width="0.9"/></svg>
    <svg class="a" style="left:217.5px;top:34px" width="11" height="11" viewBox="0 0 11 11"><rect x="1" y="1" width="6" height="6" rx="1" fill="none" stroke="#777" stroke-width="0.9"/><circle cx="6.5" cy="6.5" r="3.3" fill="#fff" stroke="#777" stroke-width="0.9"/></svg>
    <svg class="a" style="left:236px;top:35px" width="10" height="9" viewBox="0 0 10 9"><rect x="1" y="1" width="8" height="6" rx="1" fill="none" stroke="#999" stroke-width="0.9"/><path d="M3 4 H7" stroke="#999" stroke-width="0.8"/></svg>
    <svg class="a" style="left:254px;top:34px" width="10" height="10" viewBox="0 0 10 10"><path d="M1.5 8 L6 2 L8.5 4 L4.5 8.5Z" fill="#555"/></svg>
    <svg class="a" style="left:340px;top:34px" width="11" height="10" viewBox="0 0 11 10"><path d="M2 4 H7 C9 4 9.5 8 7 8 H4 M4 2 L2 4 L4 6" fill="none" stroke="#777" stroke-width="0.9"/></svg>
    <svg class="a" style="left:358px;top:34px" width="11" height="10" viewBox="0 0 11 10"><path d="M9 4 H4 C2 4 1.5 8 4 8 H7 M7 2 L9 4 L7 6" fill="none" stroke="#777" stroke-width="0.9"/></svg>
    <!-- statue photo -->
    <svg class="a" style="left:209.5px;top:50px" width="164" height="277" viewBox="0 0 164 277">
      <defs>
        <linearGradient id="torso" x1="0" y1="0" x2="1" y2="0.3"><stop offset="0" stop-color="#8e8e8e"/><stop offset="0.35" stop-color="#c4c4c4"/><stop offset="0.7" stop-color="#b0b0b0"/><stop offset="1" stop-color="#8a8a8a"/></linearGradient>
      </defs>
      <rect width="164" height="277" fill="#bababa"/>
      <path d="M60 50 C100 85 130 110 164 124 V195 C130 170 95 150 70 120Z" fill="#cfcfcf"/>
      <!-- dome -->
      <path d="M0 0 H164 V92 C140 80 110 55 78 28 L60 0Z" fill="#efefef"/>
      <!-- band -->
      <path d="M60 10 C95 45 130 75 164 90 V124 C130 105 100 80 60 50Z" fill="#d6d6d6"/>
      <path d="M78 30 C100 52 130 78 164 92" fill="none" stroke="#777" stroke-width="1.2"/>
      <path d="M78 36 C100 58 130 84 164 98" fill="none" stroke="#888" stroke-width="1"/>
      <path d="M70 44 C98 68 128 94 164 108" fill="none" stroke="#555" stroke-width="8" stroke-dasharray="8 6"/>
      <path d="M70 56 C98 80 128 104 164 118" fill="none" stroke="#999" stroke-width="1"/>
      <path d="M70 70 C98 92 128 112 164 126" fill="none" stroke="#e9e9e9" stroke-width="9"/>
      <path d="M75 80 C100 100 130 118 164 134" fill="none" stroke="#8c8c8c" stroke-width="1.2"/>
      <path d="M80 110 C110 122 140 132 164 140" fill="none" stroke="#7d7d7d" stroke-width="1.5"/>
      <path d="M82 100 C112 114 140 125 164 134" fill="none" stroke="#dedede" stroke-width="5"/>
      <path d="M76 76 L98 84 L98 142 L80 150 Z" fill="#5f5f5f"/>
      <!-- torso -->
      <path d="M0 110 C25 112 45 118 60 140 C75 165 84 190 92 230 C96 250 100 265 102 277 H0Z" fill="url(#torso)"/>
      <path d="M0 200 C15 215 25 245 30 277 H0Z" fill="#7a7a7a" opacity="0.7"/>
      <path d="M20 150 C35 160 48 175 52 200" fill="none" stroke="#999" stroke-width="5" opacity="0.7"/>
      <!-- arm/hand -->
      <path d="M76 172 C88 164 112 164 122 178 C128 192 126 215 118 228 L96 232 C90 210 82 192 76 172Z" fill="#6c6c6c"/>
      <!-- plinth -->
      <path d="M92 277 L164 192 V204 L104 277Z" fill="#e0e0e0"/>
      <path d="M104 277 L164 204 V277Z" fill="#5c5c5c"/>
    </svg>
    <!-- meta -->
    <div class="a" style="left:259.5px;top:378px;width:101.5px;height:8.5px;background:#f4f56a"></div>
    <div class="a" style="left:4.5px;top:378px;width:27px;height:8.5px;background:#f4f56a;left:215px"></div>
    <div class="a" style="left:217px;top:337.5px;font-size:5.2px;line-height:8px;font-weight:bold;color:#222;white-space:pre">Artist
Year
Medium
Subject
Dimensions
Location
Preceded by
Followed by</div>
    <div class="a" style="left:263px;top:337.5px;font-size:5.2px;line-height:8px;color:#999;white-space:pre">Michelangelo
1501–c. June 8, 1504
Marble sculpture
Biblical David
517 cm × 199 cm (17 ft × 6.5 ft)
Galleria dell'Accademia, Florence, Italy
Pietà (Michelangelo)
Madonna of Bruges</div>
    <!-- title -->
    <div class="t" style="left:26px;top:75px;font-size:19.5px;font-weight:bold;color:#111;letter-spacing:0.45px;transform:scaleX(1.035);transform-origin:0 0">David of</div>
    <div class="t" style="left:26px;top:102px;font-size:19.5px;font-weight:bold;color:#111;letter-spacing:0.45px">Michelangelo</div>
    <svg class="a" style="left:15px;top:95px" width="145" height="36" viewBox="0 0 145 36">
      <path d="M103 3.4 H145" stroke="#e85a5a" stroke-width="3.2" stroke-linecap="round"/>
      <path d="M80 7 C60 3 15 5 5 17 C0 27 30 35 72 34 C110 33 132 27 145 19" fill="none" stroke="#e85a5a" stroke-width="3.4" stroke-linecap="round"/>
    </svg>
    <!-- highlights -->
    <div class="a" style="left:26px;top:159.5px;width:131px;height:1.6px;background:#f5a31f"></div>
    <div class="a" style="left:26px;top:172.5px;width:106px;height:1.6px;background:#f5a31f"></div>
    <div class="a" style="left:154px;top:191.3px;width:36px;height:9.5px;background:#fdd99a"></div>
    <div class="a" style="left:25px;top:203.6px;width:163px;height:10.2px;background:#fdd99a"></div>
    <div class="a" style="left:25px;top:216px;width:79px;height:10.8px;background:#fdd99a"></div>
    <!-- body -->
    <div class="a" style="left:26px;top:133.8px;font-size:9.5px;line-height:13.4px;color:#555;white-space:pre">David is a <span style="text-decoration:underline;text-decoration-color:#aaa;text-underline-offset:1.5px">masterpiece</span> of <span style="text-decoration:underline;text-decoration-color:#aaa;text-underline-offset:1.5px">Renaissance</span>
<span style="text-decoration:underline;text-decoration-color:#aaa;text-underline-offset:1.5px">sculpture, created in marble between</span>
<span style="text-decoration:underline;text-decoration-color:#aaa;text-underline-offset:1.5px">1501 and 1504 by the Italian</span> artist
<span style="text-decoration:underline;text-decoration-color:#aaa;text-underline-offset:1.5px">Michelangelo</span>. David is a 5.17-metre (17
ft 0 in)<span style="text-decoration:underline;text-decoration-color:#aaa;text-underline-offset:1.5px">[a]</span> <span style="text-decoration:underline;text-decoration-color:#aaa;text-underline-offset:1.5px">marble statue</span> of the <span style="text-decoration:underline;text-decoration-color:#aaa;text-underline-offset:1.5px">Biblical</span>
figure <span style="text-decoration:underline;text-decoration-color:#aaa;text-underline-offset:1.5px">David</span>, a favoured subject in the
art of <span style="text-decoration:underline;text-decoration-color:#aaa;text-underline-offset:1.5px">Florence</span>.<span style="text-decoration:underline;text-decoration-color:#aaa;text-underline-offset:1.5px">[b]</span></div>
    <div class="a" style="left:26px;top:236px;font-size:9.5px;line-height:13.4px;color:#555;white-space:pre">David was originally commissioned as
one of a series of statues of prophets to
be positioned along the roofline of the
east end of <span style="text-decoration:underline;text-decoration-color:#aaa;text-underline-offset:1.5px">Florence Cathedral</span>, but was
instead placed in a public square,
outside the <span style="text-decoration:underline;text-decoration-color:#aaa;text-underline-offset:1.5px">Palazzo Vecchio</span>, the seat of
civic government in Florence, in the
Piazza della Signoria, where it was
unveiled on 8 September 1504. The
statue was moved to the <span style="text-decoration:underline;text-decoration-color:#aaa;text-underline-offset:1.5px">Galleria</span>
<span style="text-decoration:underline;text-decoration-color:#aaa;text-underline-offset:1.5px">dell'Accademia</span>, Florence, in 1873, and
later replaced at the original location by
<span style="text-decoration:underline;text-decoration-color:#aaa;text-underline-offset:1.5px">a replica</span>.</div>
    <div class="a" style="left:26px;top:418.8px;font-size:9.5px;line-height:13.4px;color:#555;white-space:pre">Because of the nature of the figure it
represented, the statue soon came to
symbolize the defence of civil liberties
embodied in the <span style="text-decoration:underline;text-decoration-color:#aaa;text-underline-offset:1.5px">Republic of Florence</span>,
an independent <span style="text-decoration:underline;text-decoration-color:#aaa;text-underline-offset:1.5px">city-state</span> threatened on
all sides by more powerful rival states
and by the <span style="text-decoration:underline;text-decoration-color:#aaa;text-underline-offset:1.5px">hegemony</span> of the <span style="text-decoration:underline;text-decoration-color:#aaa;text-underline-offset:1.5px">Medici</span>
<span style="text-decoration:underline;text-decoration-color:#aaa;text-underline-offset:1.5px">family</span>. The eyes of David, with a</div>
    <!-- popup -->
    <div class="a" style="left:158px;top:50.4px;width:130px;height:122px;background:#fff;border-radius:5px;box-shadow:0 1px 5px rgba(0,0,0,0.12)">
      <div class="t" style="left:0;width:130px;text-align:center;top:5px;font-size:7px;color:#333;font-weight:bold">Shapes</div>
      <div class="a" style="left:30px;top:17.5px;width:13px;height:13px;border:1px solid #8ab0dd;border-radius:2px"></div>
      <svg class="a" style="left:32.5px;top:20px" width="8" height="8" viewBox="0 0 8 8"><rect x="1" y="0.8" width="6" height="6.4" rx="1" fill="none" stroke="#333" stroke-width="0.9"/></svg>
      <svg class="a" style="left:50px;top:19.5px" width="10" height="10" viewBox="0 0 10 10"><circle cx="5" cy="5" r="3.8" fill="none" stroke="#333" stroke-width="0.9"/></svg>
      <svg class="a" style="left:68px;top:19.5px" width="10" height="10" viewBox="0 0 10 10"><path d="M1 9 L9 1" stroke="#444" stroke-width="0.9"/></svg>
      <svg class="a" style="left:86px;top:19.5px" width="10" height="10" viewBox="0 0 10 10"><path d="M1 9 L9 1 M5 1 H9 V5" fill="none" stroke="#444" stroke-width="0.9"/></svg>
      <div class="t" style="left:5px;top:38px;font-size:5px;color:#c8c8c8">Border Color</div>
      <div class="a" style="left:5.4px;top:48.9px;width:8.4px;height:8.4px;border-radius:50%;background:#111"></div>
      <div class="a" style="left:21px;top:46px;width:13px;height:13px;border:1px solid #8ab0dd;border-radius:2px"></div>
      <div class="a" style="left:23.2px;top:48.9px;width:8.4px;height:8.4px;border-radius:50%;background:#ef3a44"></div>
      <div class="a" style="left:41.4px;top:48.9px;width:8.4px;height:8.4px;border-radius:50%;background:#fbb535"></div>
      <div class="a" style="left:59.4px;top:48.9px;width:8.4px;height:8.4px;border-radius:50%;background:#7ce36b"></div>
      <div class="a" style="left:76.7px;top:48.9px;width:8.4px;height:8.4px;border-radius:50%;background:#38aef0"></div>
      <div class="a" style="left:95px;top:48.9px;width:8.4px;height:8.4px;border-radius:50%;background:#9b86f2"></div>
      <div class="a" style="left:112.8px;top:48.9px;width:8.4px;height:8.4px;border-radius:50%;background:conic-gradient(#f44 0 25%,#fc3 25% 45%,#3c6 45% 60%,#39f 60% 80%,#a4e 80%)"></div>
      <div class="t" style="left:5px;top:67px;font-size:5px;color:#c8c8c8">Thickness</div>
      <div class="a" style="left:6px;top:83px;width:2px;height:2px;border-radius:50%;background:#e33"></div>
      <div class="a" style="left:19px;top:83px;width:13px;height:1.8px;background:#2a6fdf"></div>
      <div class="a" style="left:32px;top:83.4px;width:77px;height:1px;background:#ddd"></div>
      <div class="t" style="left:112.5px;top:80.5px;font-size:5.5px;color:#444">6 pt</div>
      <div class="t" style="left:5px;top:94px;font-size:5px;color:#c8c8c8">Fill Color</div>
      <div class="a" style="left:3px;top:103.6px;width:12px;height:12px;border:1px solid #8ab0dd;border-radius:2px"></div>
      <svg class="a" style="left:5px;top:105.6px" width="8" height="8" viewBox="0 0 8 8"><path d="M1 7 L7 1" stroke="#8ab0dd" stroke-width="0.8"/></svg>
      <div class="a" style="left:23.2px;top:105.4px;width:8.4px;height:8.4px;border-radius:50%;background:#ef3a44"></div>
      <div class="a" style="left:41.4px;top:105.4px;width:8.4px;height:8.4px;border-radius:50%;background:#fbb535"></div>
      <div class="a" style="left:59.4px;top:105.4px;width:8.4px;height:8.4px;border-radius:50%;background:#7ce36b"></div>
      <div class="a" style="left:76.7px;top:105.4px;width:8.4px;height:8.4px;border-radius:50%;background:#38aef0"></div>
      <div class="a" style="left:95px;top:105.4px;width:8.4px;height:8.4px;border-radius:50%;background:#9b86f2"></div>
      <div class="a" style="left:112.8px;top:105.4px;width:8.4px;height:8.4px;border-radius:50%;background:conic-gradient(#f44 0 25%,#fc3 25% 45%,#3c6 45% 60%,#39f 60% 80%,#a4e 80%)"></div>
    </div>
  </div>
</div>

<!-- ============ IPHONE ============ -->
<div class="a" style="left:24px;top:352px;width:12px;height:392px;background:#2c2f31"></div>
<div id="phone" class="a" style="left:32.5px;top:328.8px;width:214.5px;height:442.5px;background:#131618;border-radius:30px;border:1.8px solid #454b50">
  <div id="phscreen" class="a" style="left:2.8px;top:5.7px;width:205.6px;height:431px;background:#fdfdfe;border-radius:26px;overflow:hidden">
    <div class="a" style="left:0;top:0;width:206px;height:76px;background:linear-gradient(#f3f4f6,#f5f6f8 70%,#f9fafb)"></div>
    <!-- status -->
    <div class="t" style="left:15.5px;top:5.3px;font-size:8.8px;font-weight:bold;color:#111">9:41</div>
    <div class="a" style="left:48.5px;top:-2px;width:106px;height:17.5px;background:#0b0c0d;border-radius:0 0 11px 11px"></div>
    <div class="a" style="left:89px;top:9px;width:26px;height:1.5px;background:#3a3d40;border-radius:1px"></div>
    <svg class="a" style="left:159.5px;top:4.8px" width="39.5" height="9.4" viewBox="0 0 38 9"><path d="M1.5 8 v-2 M3.8 8 v-3 M6.1 8 v-4.5 M8.4 8 v-6" stroke="#111" stroke-width="1.6"/><path d="M12.5 3.6 a5.5 5.5 0 0 1 7.6 0 M14 5.3 a3.3 3.3 0 0 1 4.6 0" fill="none" stroke="#111" stroke-width="1.2"/><circle cx="16.3" cy="7.4" r="0.9" fill="#111"/><rect x="23.5" y="2.5" width="10.5" height="5.5" rx="1.3" fill="#111"/></svg>
    <!-- nav -->
    <div class="t" style="left:8.2px;top:32.2px;font-size:8.8px;color:#3d85ea">Done</div>
    <div class="a" style="left:60px;top:27.3px;width:82px;height:16px;background:#fff;border-radius:4px"></div>
    <div class="t" style="left:79.3px;top:32.2px;font-size:8.8px;font-weight:bold;color:#222">Fill &amp; Sign</div>
    <svg class="a" style="left:130.5px;top:31.5px" width="7" height="10" viewBox="0 0 7 10"><path d="M1.5 4 L3.5 2 L5.5 4 M1.5 6 L3.5 8 L5.5 6" fill="none" stroke="#777" stroke-width="0.9"/></svg>
    <div class="t" style="left:181.5px;top:32.5px;font-size:9px;color:#777;letter-spacing:0.8px">···</div>
    <!-- tools -->
    <div class="t" style="left:51px;top:58.2px;font-size:8.2px;color:#555">|Ab</div>
    <svg class="a" style="left:74.5px;top:57.2px" width="10" height="10" viewBox="0 0 10 10"><path d="M1.5 5.5 L4 8 L8.5 2" fill="none" stroke="#444" stroke-width="1.1"/></svg>
    <svg class="a" style="left:96.5px;top:57.2px" width="10" height="10" viewBox="0 0 10 10"><path d="M1.5 1.5 L8.5 8.5 M8.5 1.5 L1.5 8.5" stroke="#444" stroke-width="1.1"/></svg>
    <svg class="a" style="left:117.5px;top:56.7px" width="11" height="11" viewBox="0 0 11 11"><circle cx="5.5" cy="3" r="2" fill="none" stroke="#777" stroke-width="0.9"/><path d="M5.5 5 V7.5 M1.5 7.5 H9.5 V9 H1.5Z" fill="none" stroke="#777" stroke-width="0.9"/></svg>
    <svg class="a" style="left:139.5px;top:56.7px" width="12" height="11" viewBox="0 0 12 11"><path d="M1 9.5 H11 M2 8 C4 2 6 1 6 4 C6 7 4 8 8 6 L10 7" fill="none" stroke="#999" stroke-width="0.9"/></svg>
    <div class="t" style="left:8.1px;top:87.3px;font-size:7.2px;color:#b4b4b8;letter-spacing:0.1px">DATE</div>
    <div class="a" style="left:91.3px;top:82.6px;width:104.2px;height:15.6px;background:#e9eefb;border:1px solid #ccd6ee;border-top-color:#bfc8e6;border-radius:2px"></div>
    <div class="t" style="left:96.5px;top:87.0px;font-size:7.7px;font-weight:bold;color:#1a1f2a;letter-spacing:0.15px">02/01/2023</div>
    <div class="t" style="left:8.1px;top:106.8px;font-size:7.2px;color:#b4b4b8;letter-spacing:0.1px">SENDER'S NAME</div>
    <div class="a" style="left:91.3px;top:102.1px;width:104.2px;height:15.6px;background:#e9eefb;border:1px solid #ccd6ee;border-top-color:#bfc8e6;border-radius:2px"></div>
    <div class="t" style="left:96.5px;top:106.5px;font-size:7.7px;font-weight:bold;color:#1a1f2a;letter-spacing:0.15px">Georgina Valenzuela</div>
    <div class="t" style="left:8.1px;top:126.9px;font-size:7.2px;color:#b4b4b8;letter-spacing:0.1px">COMPANY</div>
    <div class="a" style="left:91.3px;top:122.2px;width:104.2px;height:15.6px;background:#e9eefb;border:1px solid #ccd6ee;border-top-color:#bfc8e6;border-radius:2px"></div>
    <div class="t" style="left:96.5px;top:126.5px;font-size:7px;color:#b8c6df">Type here</div>
    <div class="t" style="left:8.1px;top:146.8px;font-size:7.2px;color:#b4b4b8;letter-spacing:0.1px">ADDRESS</div>
    <div class="a" style="left:91.3px;top:142.1px;width:104.2px;height:15.6px;background:#e9eefb;border:1px solid #ccd6ee;border-top-color:#bfc8e6;border-radius:2px"></div>
    <div class="t" style="left:96.5px;top:146.4px;font-size:7px;color:#b8c6df">Type here</div>
    <div class="t" style="left:8.1px;top:166.3px;font-size:7.2px;color:#b4b4b8;letter-spacing:0.1px">FLOOR/SUITE/ROOM</div>
    <div class="a" style="left:91.3px;top:161.6px;width:104.2px;height:15.6px;background:#e9eefb;border:1px solid #ccd6ee;border-top-color:#bfc8e6;border-radius:2px"></div>
    <div class="t" style="left:96.5px;top:165.9px;font-size:7px;color:#b8c6df">Type here</div>
    <div class="t" style="left:8.1px;top:185.8px;font-size:7.2px;color:#b4b4b8;letter-spacing:0.1px">CITY</div>
    <div class="a" style="left:91.3px;top:181.1px;width:104.2px;height:15.6px;background:#e9eefb;border:1px solid #ccd6ee;border-top-color:#bfc8e6;border-radius:2px"></div>
    <div class="t" style="left:96.5px;top:185.5px;font-size:7.7px;font-weight:bold;color:#1a1f2a;letter-spacing:0.15px">San Francisco</div>
    <div class="t" style="left:8.1px;top:205.9px;font-size:7.2px;color:#b4b4b8;letter-spacing:0.1px">STATE</div>
    <div class="a" style="left:91.3px;top:201.2px;width:104.2px;height:15.6px;background:#e9eefb;border:1px solid #ccd6ee;border-top-color:#bfc8e6;border-radius:2px"></div>
    <div class="t" style="left:8.1px;top:225.3px;font-size:7.2px;color:#b4b4b8;letter-spacing:0.1px">PHONE NUMBER</div>
    <div class="a" style="left:91.3px;top:220.6px;width:104.2px;height:15.6px;background:#e9eefb;border:1px solid #ccd6ee;border-top-color:#bfc8e6;border-radius:2px"></div>
    <div class="t" style="left:96.5px;top:224.9px;font-size:7px;color:#b8c6df">Type here</div>

    <div class="t" style="left:8.1px;top:245.3px;font-size:7.2px;color:#b4b4b8;letter-spacing:0.1px">SIGNATURE</div>
    <div class="a" style="left:8.2px;top:259.5px;width:188.3px;height:49.7px;background:#f3f5fa;border:1px dashed #b8bfd0;border-radius:2px"></div>
    <svg class="a" style="left:8.2px;top:259.5px" width="188.3" height="49.6" viewBox="40 78 1318 347">
      <path d="M140 235 L400 235 C470 235 520 200 590 165 C640 140 600 125 540 150 C450 185 370 240 380 290 C390 325 500 330 520 300 C530 280 470 272 400 280 C480 262 580 250 650 235 C680 225 700 205 672 206 C640 212 645 262 700 260 C740 255 750 240 760 232 C766 250 760 272 760 290 C772 250 792 222 822 226 C850 232 832 262 862 260 C900 250 900 220 880 216 C860 216 860 252 892 250 C920 240 918 245 918 262 C918 322 900 400 880 390 C860 380 880 300 930 262 C960 242 980 252 990 236 L972 292 C1002 242 1032 222 1052 242 C1062 262 1042 282 1082 276 C1132 270 1200 262 1210 242 C1215 222 1180 212 1162 242 C1152 272 1200 282 1222 270" fill="none" stroke="#111" stroke-width="13" stroke-linecap="round" stroke-linejoin="round"/>
    </svg>
  </div>
</div>


<!-- california popup -->
<div class="a" style="left:70.9px;top:528px;width:132.5px;height:34px;background:#fff;box-shadow:0 2px 5px rgba(0,0,0,0.22);border-radius:1px"></div>
<div class="a" style="left:75.4px;top:531.2px;width:124px;height:28.3px;background:linear-gradient(#c9ddf8,#b8d1f3)"></div>
<div class="t" style="left:79.5px;top:534.5px;font-size:25px;color:#0d1320;letter-spacing:0.45px;-webkit-text-stroke:0.8px #0d1320">California</div>
<div class="a" style="left:74.3px;top:532px;width:1.8px;height:28px;background:#2f7be0"></div>
<div class="a" style="left:72.7px;top:530.5px;width:5px;height:5px;border-radius:50%;background:#2f7be0"></div>
<div class="a" style="left:198px;top:532px;width:1.8px;height:26.5px;background:#2f7be0"></div>
<div class="a" style="left:196.4px;top:555.8px;width:5px;height:5px;border-radius:50%;background:#2f7be0"></div>
<!-- watermark -->
<div class="a" style="left:1377px;top:752px;width:7px;height:32px;background:#6e6e6e"></div>
<div class="a" style="left:1364px;top:745px;width:13px;height:12px;background:#4a4a4a"></div>
<div class="t" style="left:1322px;top:763px;font-size:22px;font-weight:bold;color:#fff;-webkit-text-stroke:0.6px #fff">xyax.cn</div>

</body></html>
